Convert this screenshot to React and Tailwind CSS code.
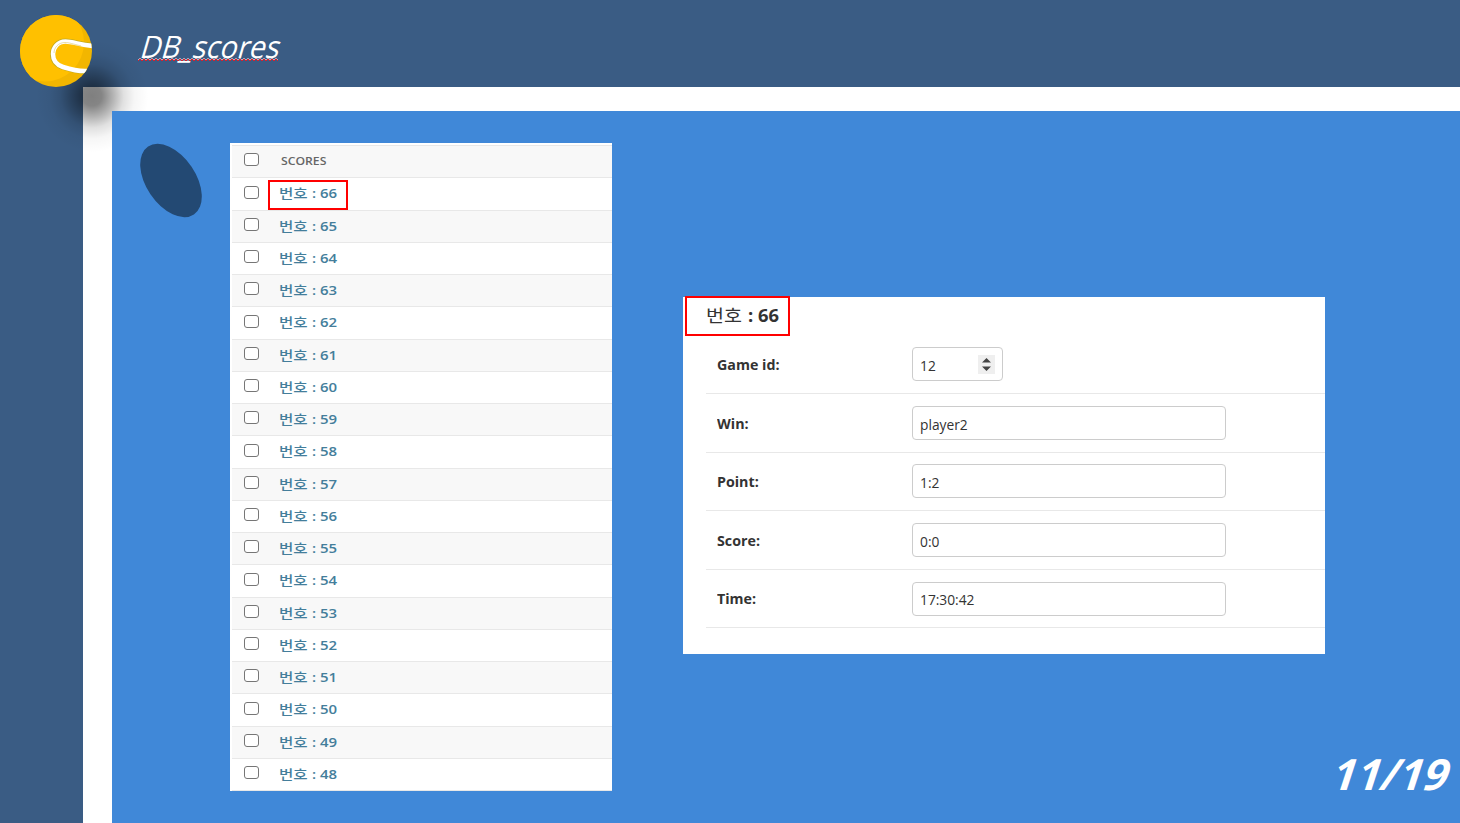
import React from "react";

const scores = Array.from({ length: 19 }, (_, i) => 66 - i);

const fields = [
  { label: "Game id:", value: "12", number: true },
  { label: "Win:", value: "player2" },
  { label: "Point:", value: "1:2" },
  { label: "Score:", value: "0:0" },
  { label: "Time:", value: "17:30:42" },
];

function Ball() {
  return (
    <svg className="relative z-20 h-[72px] w-[72px] shrink-0" viewBox="0 0 72 72">
      <defs>
        <clipPath id="ball">
          <circle cx="36" cy="36" r="36" />
        </clipPath>
      </defs>
      <g clipPath="url(#ball)">
        <rect width="72" height="72" fill="#f2b600" />
        <circle cx="25" cy="27.500" r="39" fill="#ffc000" />
        <path
          d="M74 30.500 C62 30 53 26 45.500 26 C37 26 32.500 33 32.500 39 C32.500 46 37 50.500 43 52.500 C51 55 58 57 67 56.500"
          fill="none"
          stroke="#c5aa1c"
          strokeWidth="5"
        />
        <path
          d="M74 31 C62 30.500 53 26.500 45.500 26.500 C37.500 26.500 33 33 33 39 C33 45.500 37 50 43 52 C51 54.500 58 56.500 67 56"
          fill="none"
          stroke="#fff"
          strokeWidth="4.500"
        />
        <path
          d="M61 31 C53 29 49 27.500 45 27.500 C38 27.500 34 33 34 38"
          fill="none"
          stroke="#dcc66a"
          strokeWidth="0.600"
        />
      </g>
    </svg>
  );
}

function Title() {
  return (
    <div className="relative ml-[48px] mt-[9px] h-[44px] w-[150px]">
      <h1 className="-ml-[4px] origin-bottom-left -skew-x-[16deg] whitespace-nowrap font-['Open_Sans',sans-serif] text-[31px] leading-[44px] font-normal text-white">
        <span className="inline-block origin-left scale-x-[0.930]">DB_scores</span>
      </h1>
      <svg className="absolute -left-[2px] top-[34px] h-[4px] w-[140px]" viewBox="0 0 140 4">
        <defs>
          <pattern id="wave" width="4" height="4" patternUnits="userSpaceOnUse">
            <path d="M0 3 L2 1 L4 3" fill="none" stroke="#e8d4dc" strokeWidth="1" transform="translate(0 -0.700)" />
            <path d="M0 3 L2 1 L4 3" fill="none" stroke="#d6202c" strokeWidth="1" />
          </pattern>
        </defs>
        <rect width="140" height="4" fill="url(#wave)" />
      </svg>
    </div>
  );
}

function Check() {
  return (
    <span className="ml-[12px] mb-[3.300px] h-[13px] w-[15px] shrink-0 rounded-[3px] border border-[#767676] bg-white" />
  );
}

function ScoreList() {
  return (
    <section className="h-[648px] w-[382px] shrink-0 bg-white pl-[2px] pt-[2px] font-['Open_Sans','Noto_Sans_CJK_KR',sans-serif]">
      <div className="flex h-[32.250px] items-center border-t border-[#e8e8e8] bg-[#f8f8f8]">
        <Check />
        <span className="ml-[22px] text-[11px] font-semibold text-[#666]">
          <span className="inline-block origin-left scale-x-[1.110]">SCORES</span>
        </span>
      </div>
      {scores.map((n, i) => (
        <div
          key={n}
          className={
            "relative flex h-[32.250px] items-center border-t border-[#e8e8e8] " + (i % 2 ? "bg-[#f8f8f8]" : "bg-white")
          }
        >
          <Check />
          <span className="mb-px ml-[20px] flex whitespace-nowrap text-[13px] leading-[20px] text-[#447e9b]">
            <span className="w-[33px]">
              <span className="inline-block origin-left scale-x-[1.200] font-medium">번호</span>
            </span>
            <span className="inline-block origin-left scale-x-[1.150] font-semibold">: {n}</span>
          </span>
          {i === 0 && <span className="absolute left-[36px] top-[2px] h-[30px] w-[80px] border-2 border-[#f00]" />}
        </div>
      ))}
      <div className="h-px bg-[#e8e8e8]" />
    </section>
  );
}

function Spinner() {
  return (
    <svg className="ml-auto mr-[7px] h-[19px] w-[17px]" viewBox="0 0 17 19">
      <rect width="17" height="19" fill="#efefef" />
      <path d="M4 7.500 L8.500 3 L13 7.500 Z M4 11.500 L8.500 16 L13 11.500 Z" fill="#444" />
    </svg>
  );
}

function Detail() {
  return (
    <section className="relative h-[357px] w-[642px] shrink-0 bg-white pl-[23px] font-['Open_Sans','Noto_Sans_CJK_KR',sans-serif] text-[#333]">
      <h2 className="flex h-[38.600px] whitespace-nowrap text-[17px] leading-[38px]">
        <span className="w-[41.500px]">
          <span className="inline-block origin-left scale-x-[1.150]">번호</span>
        </span>
        <span className="inline-block origin-left scale-x-[1.080] font-bold">: 66</span>
      </h2>
      <span className="absolute left-[2px] top-[-1px] h-[40px] w-[105px] border-2 border-[#f00]" />
      {fields.map((f) => (
        <div key={f.label} className="flex h-[58.550px] items-center border-b border-[#e8e8e8]">
          <div className="w-[206px] pl-[11px] text-[15px] font-bold">
            <span className="inline-block origin-left scale-x-[0.950]">{f.label}</span>
          </div>
          <div
            className={
              "flex h-[34px] items-center rounded-[4px] border border-[#ccc] bg-white pl-[7px] text-[14.500px] " +
              (f.number ? "w-[91px]" : "w-[314px]")
            }
          >
            <span className="mt-[3px] inline-block origin-left scale-x-[0.950]">{f.value}</span>
            {f.number && <Spinner />}
          </div>
        </div>
      ))}
    </section>
  );
}

export default function App() {
  return (
    <div className="relative flex h-[823px] w-[1460px] flex-col overflow-hidden bg-[#3a5c84]">
      <header className="flex h-[87px] shrink-0 pl-[20px] pt-[15px]">
        <Ball />
        <Title />
      </header>
      <div className="absolute left-[22px] top-[26px] z-10 h-[140px] w-[140px] bg-[radial-gradient(circle,rgba(0,0,0,0.5)_0%,rgba(0,0,0,0.48)_10%,rgba(0,0,0,0.3)_21%,rgba(0,0,0,0.12)_32%,rgba(0,0,0,0.035)_43%,transparent_57%)]" />
      <div className="flex min-h-0 flex-1 pl-[83px]">
        <div className="flex flex-1 bg-white pl-[29px] pt-[24px]">
          <main className="relative z-20 flex flex-1 items-start bg-[#4088d8] pl-[28px]">
            <svg className="mt-[32px] h-[75px] w-[62px] shrink-0" viewBox="0 0 62 75">
              <ellipse cx="31" cy="37.500" rx="41" ry="24.800" transform="rotate(56 31 37.500)" fill="#234973" />
            </svg>
            <div className="ml-[28px] mt-[32px]">
              <ScoreList />
            </div>
            <div className="ml-[71px] mt-[186px] flex flex-col">
              <Detail />
              <div className="ml-[651px] mt-[91px] w-[120px] -skew-x-[18deg] whitespace-nowrap font-['Open_Sans',sans-serif] text-[43px] leading-[58px] font-bold text-white">
                <span className="inline-block origin-left scale-x-[1.000]">11/19</span>
              </div>
            </div>
          </main>
        </div>
      </div>
    </div>
  );
}
